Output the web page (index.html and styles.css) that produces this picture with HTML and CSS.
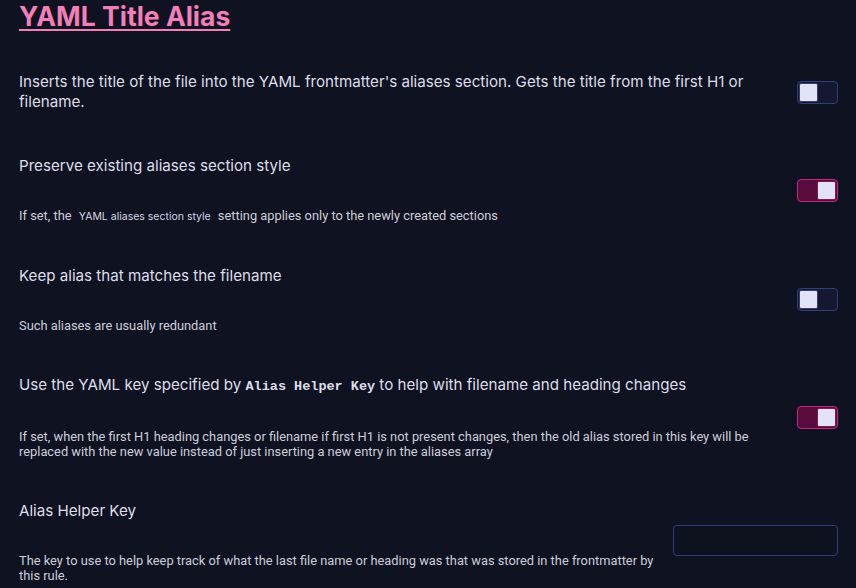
FILE: index.html
```html
<!DOCTYPE html>
<html lang="en">
<head>
<meta charset="utf-8">
<title>YAML Title Alias</title>
<link rel="stylesheet" href="styles.css">
</head>
<body>
<main class="page">
  <h1 class="title">YAML Title Alias</h1>
  <div class="settings">
    <div class="item first">
      <div class="info">
        <div class="name">Inserts the title of the file into the YAML frontmatter's aliases section. Gets the title from the first H1 or filename.</div>
      </div>
      <div class="toggle"><span class="knob"></span></div>
    </div>
    <div class="item">
      <div class="info">
        <div class="name">Preserve existing aliases section style</div>
        <div class="desc">If set, the <code class="code">YAML aliases section style</code> setting applies only to the newly created sections</div>
      </div>
      <div class="toggle on"><span class="knob"></span></div>
    </div>
    <div class="item">
      <div class="info">
        <div class="name">Keep alias that matches the filename</div>
        <div class="desc">Such aliases are usually redundant</div>
      </div>
      <div class="toggle"><span class="knob"></span></div>
    </div>
    <div class="item">
      <div class="info">
        <div class="name">Use the YAML key specified by <code class="mono">Alias Helper Key</code> to help with filename and heading changes</div>
        <div class="desc">If set, when the first H1 heading changes or filename if first H1 is not present changes, then the old alias stored in this key will be replaced with the new value instead of just inserting a new entry in the aliases array</div>
      </div>
      <div class="toggle on"><span class="knob"></span></div>
    </div>
    <div class="item">
      <div class="info">
        <div class="name">Alias Helper Key</div>
        <div class="desc">The key to use to help keep track of what the last file name or heading was that was stored in the frontmatter by this rule.</div>
      </div>
      <input class="field" type="text" aria-label="Alias Helper Key">
    </div>
  </div>
</main>
</body>
</html>
```
FILE: styles.css
```css
html, body {
  margin: 0;
  padding: 0;
  background: #0f1221;
}
body {
  font-family: Inter, "Noto Sans", sans-serif;
  color: #dcdde8;
}
.page {
  padding: 0 18px 0 19px;
}
.title {
  margin: 0;
  padding-top: 2px;
  font-size: 26.5px;
  line-height: 28px;
  font-weight: 700;
  color: #f27fb7;
  text-decoration: underline;
  text-decoration-thickness: 2px;
  text-underline-offset: 3px;
}
.settings {
  display: flex;
  flex-direction: column;
  gap: 42px;
  margin-top: 42px;
}
.item {
  display: flex;
  align-items: center;
  gap: 13px;
}
.item.first {
  margin-bottom: 2px;
}
.info {
  flex: 1;
  min-width: 0;
}
.name {
  font-size: 15.15px;
  line-height: 20px;
  color: #dddee9;
}
.desc {
  margin-top: 32px;
  font-family: Roboto, Inter, sans-serif;
  font-size: 12.85px;
  line-height: 15px;
  color: #cdcfdb;
}
.code {
  font-family: Inter, sans-serif;
  font-size: 10.5px;
  padding: 0 4px;
  color: #d4d6e2;
}
.mono {
  font-family: "Liberation Mono", "Courier New", monospace;
  font-weight: 700;
  font-size: 13.5px;
  color: #dddee9;
}
.toggle {
  flex-shrink: 0;
  box-sizing: border-box;
  width: 41px;
  height: 23px;
  border: 1px solid #333d7c;
  border-radius: 4px;
  background: #151830;
  padding: 1px;
  display: flex;
  justify-content: flex-start;
}
.toggle.on {
  border-color: #c1297a;
  background: #5a0b3e;
  justify-content: flex-end;
}
.knob {
  box-sizing: border-box;
  width: 19px;
  height: 19px;
  border-radius: 2px;
  background: #e2e4f6;
  border: 1px solid #3a3f6a;
}
.toggle.on .knob {
  border-color: #7a1d55;
}
.field {
  flex-shrink: 0;
  box-sizing: border-box;
  width: 165px;
  height: 31px;
  margin-bottom: 3px;
  border: 1px solid #303a80;
  border-radius: 4px;
  background: #0e111e;
  color: #dddee9;
  font-family: Inter, sans-serif;
  font-size: 13px;
  padding: 0 8px;
}
```
